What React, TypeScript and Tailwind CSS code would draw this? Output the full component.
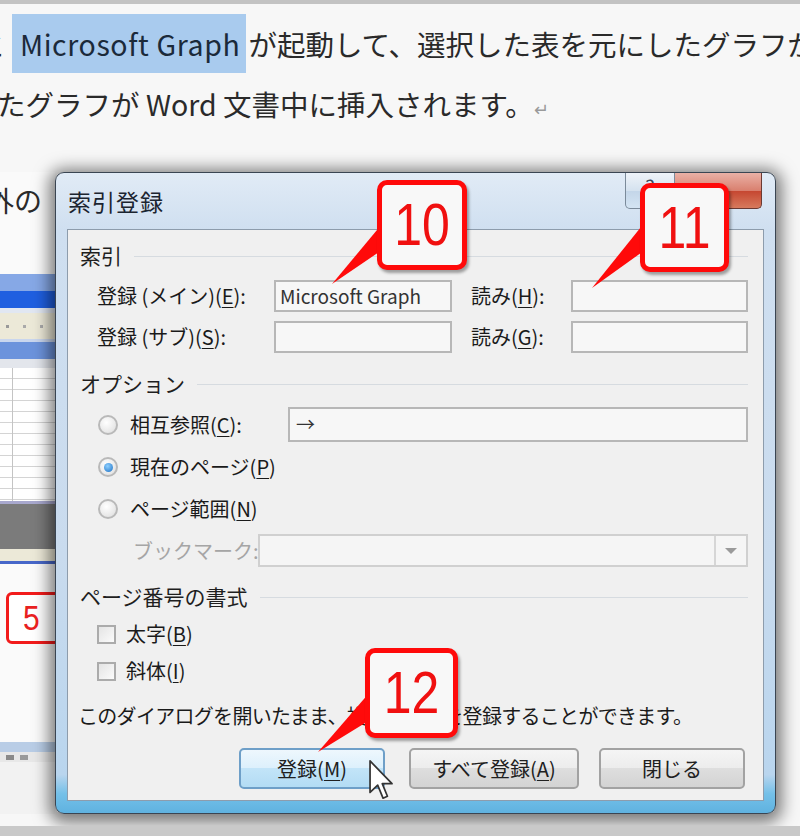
import React from 'react';

// Vista-style dialog text box
function Field({ className = '', children }: { className?: string; children?: React.ReactNode }) {
  return (
    <div
      className={`h-full border-2 border-[#b7b7b7] bg-[#f7f7f7] flex items-center px-[4px] text-[19px] text-[#333] ${className}`}
    >
      {children}
    </div>
  );
}

function Radio({ checked = false }: { checked?: boolean }) {
  return (
    <div className="w-[20px] h-[20px] shrink-0 rounded-full border-2 border-[#b9b9b9] bg-[radial-gradient(circle_at_40%_35%,#ffffff,#dcdcdc)] flex items-center justify-center">
      {checked && (
        <div className="w-[9px] h-[9px] rounded-full bg-[radial-gradient(circle_at_40%_35%,#8fd0ff,#1a6fc4)]" />
      )}
    </div>
  );
}

function Check() {
  return (
    <div className="w-[19px] h-[19px] shrink-0 border-2 border-[#ababab] bg-[linear-gradient(135deg,#e4e4e4,#fbfbfb)]" />
  );
}

function GroupLabel({ text }: { text: string }) {
  return (
    <div className="h-[28px] flex items-center text-[21px] text-[#1f1f1f]">
      <span>{text}</span>
      <div className="flex-1 ml-[12px] border-t border-[#d6dbe0]" />
    </div>
  );
}

function Key({ k }: { k: string }) {
  return (
    <>
      (<span className="underline underline-offset-[3px] decoration-1">{k}</span>)
    </>
  );
}

function Callout({ n, className }: { n: string; className: string }) {
  return (
    <div
      className={`absolute border-[5px] border-[#ff0a0a] rounded-[10px] bg-[#f8f8f8] shadow-[2px_3px_3px_rgba(0,0,0,0.35)] flex items-center justify-center ${className}`}
    >
      <span className="font-['Liberation_Sans',Arial,sans-serif] text-[50px] leading-none text-[#f01010] scale-y-[1.2]">
        {n}
      </span>
    </div>
  );
}

function DialogButton({
  children,
  className = '',
  hot = false,
}: {
  children: React.ReactNode;
  className?: string;
  hot?: boolean;
}) {
  return (
    <div
      className={`h-full rounded-[5px] border-2 flex items-center justify-center text-[20px] text-[#202020] ${
        hot
          ? 'border-[#6e9fc8] bg-[linear-gradient(to_bottom,#eef7fd_0%,#dcf0fc_50%,#c2e4f8_50%,#b3dcf4_100%)]'
          : 'border-[#a2a2a2] bg-[linear-gradient(to_bottom,#f5f5f5_0%,#ececec_50%,#dedede_50%,#d3d3d3_100%)]'
      } ${className}`}
    >
      {children}
    </div>
  );
}

function LeftStrip() {
  return (
    <div className="w-[55px] shrink-0 overflow-hidden bg-[#fafafa] flex flex-col">
      <div className="h-[56px] leading-[56px] text-[28px] text-[#2a2a2a] whitespace-nowrap -ml-[14px]">外の</div>
      <div className="h-[46px]" />
      <div className="h-[17px] bg-[#86a8e6]" />
      <div className="h-[17px] bg-[#1f5fe0]" />
      <div className="h-[5px] bg-[#e1e7f2]" />
      <div className="h-[26px] bg-[#ece9d8] flex items-center gap-[14px] pl-[6px]">
        <div className="w-[3px] h-[3px] bg-[#999]" />
        <div className="w-[3px] h-[3px] bg-[#aaa]" />
        <div className="w-[3px] h-[3px] bg-[#aaa]" />
      </div>
      <div className="h-[3px] bg-[#c9d6ee]" />
      <div className="h-[17px] bg-[#6c93dc]" />
      <div className="h-[9px] bg-[#e3e6ec]" />
      <div className="h-[133px] bg-[repeating-linear-gradient(to_bottom,#ffffff_0px,#ffffff_10px,#d4d4d4_10px,#d4d4d4_11px)]">
        <div className="ml-[12px] h-full border-l border-[#c4c4c4]" />
      </div>
      <div className="h-[3px] bg-[#a8a8ce]" />
      <div className="h-[45px] bg-[#7b7b7b]" />
      <div className="h-[12px] bg-[#ece9d8]" />
      <div className="h-[3px] bg-[#4767c9]" />
      <div className="h-[28px]" />
      <div className="h-[52px] ml-[6px] w-[70px] border-[3px] border-[#f21b1b] rounded-[6px] bg-white flex items-center pl-[14px]">
        <span className="font-['Liberation_Sans',Arial,sans-serif] text-[30px] leading-none text-[#e82020] scale-y-[1.15]">5</span>
      </div>
      <div className="h-[98px]" />
      <div className="h-[10px] bg-[#b9cde6]" />
      <div className="h-[10px] bg-[#e8e8e8] flex items-center gap-[6px] pl-[6px]">
        <div className="w-[8px] h-[5px] bg-[#8a8a8a]" />
        <div className="w-[8px] h-[5px] bg-[#9a9a9a]" />
      </div>
      <div className="flex-1 bg-[#f2f2f2]" />
    </div>
  );
}

function Dialog() {
  return (
    <div className="w-[721px] h-[642px] shrink-0 rounded-[9px] border border-[#3a4552] bg-[linear-gradient(to_bottom,#e1ebf6_0%,#cfdff0_9%,#c9dbee_60%,#b9d5ee_94%,#74c0e8_97%,#5fb2e0_100%)] shadow-[0_3px_16px_6px_rgba(0,0,0,0.5)] flex flex-col">
      {/* title bar */}
      <div className="h-[56px] flex items-start pl-[12px] pr-[13px]">
        <div className="self-center text-[23px] text-[#1b2430] tracking-[1px]">索引登録</div>
        <div className="ml-auto flex h-[36px]">
          <div className="w-[50px] h-full border border-t-0 border-[#7b8a9a] rounded-bl-[5px] bg-[linear-gradient(to_bottom,#eef3f9,#d5e2ef_50%,#c3d5e8_50%,#d4e4f3)] flex items-start justify-center text-[20px] leading-[28px] text-[#3a4a5c]">
            ?
          </div>
          <div className="w-[87px] h-full border border-t-0 border-l-0 border-[#6b3a33] rounded-br-[5px] bg-[linear-gradient(to_bottom,#eab1a6,#d9806f_50%,#c5452f_50%,#d77a5d)] flex items-center justify-center text-[22px] text-white">
            ✕
          </div>
        </div>
      </div>

      {/* client area */}
      <div className="mx-[11px] mb-[12px] flex-1 border border-[#8d9cac] bg-[#f0f0f0] pl-[12px] pr-[15px] pt-[12px] flex flex-col text-[20px] text-[#1a1a1a]">
        <GroupLabel text="索引" />

        <div className="mt-[10px] h-[32px] flex items-center pl-[17px]">
          <div className="w-[177px] shrink-0 whitespace-nowrap">
            登録 (メイン)<Key k="E" />:
          </div>
          <Field className="w-[178px] shrink-0">Microsoft Graph</Field>
          <div className="w-[119px] shrink-0 pl-[19px] whitespace-nowrap">
            読み<Key k="H" />:
          </div>
          <Field className="flex-1" />
        </div>

        <div className="mt-[9px] h-[32px] flex items-center pl-[17px]">
          <div className="w-[177px] shrink-0 whitespace-nowrap">
            登録 (サブ)<Key k="S" />:
          </div>
          <Field className="w-[178px] shrink-0" />
          <div className="w-[119px] shrink-0 pl-[19px] whitespace-nowrap">
            読み<Key k="G" />:
          </div>
          <Field className="flex-1" />
        </div>

        <div className="mt-[17px]">
          <GroupLabel text="オプション" />
        </div>

        <div className="mt-[9px] h-[35px] flex items-center pl-[18px]">
          <Radio />
          <div className="ml-[12px] w-[158px] shrink-0 whitespace-nowrap">
            相互参照<Key k="C" />:
          </div>
          <Field className="flex-1 px-[6px]">→</Field>
        </div>

        <div className="mt-[10px] h-[30px] flex items-center pl-[18px]">
          <Radio checked />
          <div className="ml-[12px] whitespace-nowrap">
            現在のページ<Key k="P" />
          </div>
        </div>

        <div className="mt-[12px] h-[30px] flex items-center pl-[18px]">
          <Radio />
          <div className="ml-[12px] whitespace-nowrap">
            ページ範囲<Key k="N" />
          </div>
        </div>

        <div className="mt-[10px] h-[33px] flex items-center pl-[53px]">
          <div className="w-[125px] shrink-0 whitespace-nowrap text-[#a5a5a5]">ブックマーク:</div>
          <div className="flex-1 h-full border-2 border-[#d0d0d0] bg-[#f5f5f5] flex justify-end">
            <div className="w-[32px] h-full border-l-2 border-[#d6d6d6] flex items-center justify-center">
              <div className="w-0 h-0 border-l-[6px] border-r-[6px] border-t-[6px] border-l-transparent border-r-transparent border-t-[#9a9a9a]" />
            </div>
          </div>
        </div>

        <div className="mt-[16px]">
          <GroupLabel text="ページ番号の書式" />
        </div>

        <div className="mt-[9px] h-[28px] flex items-center pl-[17px]">
          <Check />
          <div className="ml-[10px] whitespace-nowrap">
            太字<Key k="B" />
          </div>
        </div>

        <div className="mt-[9px] h-[28px] flex items-center pl-[17px]">
          <Check />
          <div className="ml-[10px] whitespace-nowrap">
            斜体<Key k="I" />
          </div>
        </div>

        <div className="mt-[17px] h-[28px] flex items-center -ml-[2px] whitespace-nowrap tracking-[-0.7px]">
          このダイアログを開いたまま、複数の項目を登録することができます。
        </div>

        <div className="mt-[18px] h-[41px] flex justify-end pr-[3px]">
          <DialogButton hot className="w-[146px]">
            登録<Key k="M" />
          </DialogButton>
          <DialogButton className="w-[170px] ml-[24px]">
            すべて登録<Key k="A" />
          </DialogButton>
          <DialogButton className="w-[146px] ml-[20px]">閉じる</DialogButton>
        </div>
      </div>
    </div>
  );
}

export default function App() {
  return (
    <div className="relative w-[800px] h-[836px] overflow-hidden bg-[#f7f7f7] border-t-4 border-[#c3c3c3] font-['Noto_Sans_CJK_JP','Noto_Sans',sans-serif]">
      {/* document text behind the dialog */}
      <div className="pt-[10px] text-[28.5px] leading-[60px] text-[#2a2a2a] whitespace-nowrap">
        <div className="-ml-[23px]">
          と{' '}
          <span className="inline-block h-[59px] leading-[59px] pl-[8px] pr-[6px] bg-[#a9cbee] text-[#1b2a3a] tracking-[0.6px]">
            Microsoft Graph
          </span>
          <span className="ml-[2px]">が起動して、選択した表を元にしたグラフが表示されます。</span>
        </div>
        <div className="-ml-[3px]">
          たグラフが Word 文書中に挿入されます。<span className="text-[18px] text-[#9a9a9a]">↵</span>
        </div>
      </div>

      <div className="mt-[34px] flex">
        <LeftStrip />
        <Dialog />
      </div>
      <div className="absolute left-0 right-0 bottom-0 h-[10px] bg-[#c9c9c9]" />

      {/* callout pointers */}
      <svg className="absolute left-0 top-[-4px] w-[800px] h-[836px] pointer-events-none" viewBox="0 0 800 836">
        <polygon points="382,224 382,250 332,284" fill="#ff0a0a" />
        <polygon points="645,222 645,250 592,288" fill="#ff0a0a" />
        <polygon points="370,692 370,720 318,752" fill="#ff0a0a" />
      </svg>

      <Callout n="10" className="left-[377px] top-[176px] w-[90px] h-[90px]" />
      <Callout n="11" className="left-[640px] top-[179px] w-[89px] h-[89px]" />
      <Callout n="12" className="left-[365px] top-[644px] w-[93px] h-[90px]" />

      {/* mouse pointer */}
      <svg className="absolute left-[369px] top-[756px] w-[25px] h-[42px]" viewBox="0 0 13 22">
        <path
          d="M0.5 0.5 L0.5 17 L4.5 13.2 L7.3 20 L9.6 19 L6.9 12.4 L12 12.4 Z"
          fill="#ffffff"
          stroke="#333333"
          strokeWidth="0.9"
          strokeLinejoin="round"
        />
      </svg>
    </div>
  );
}
